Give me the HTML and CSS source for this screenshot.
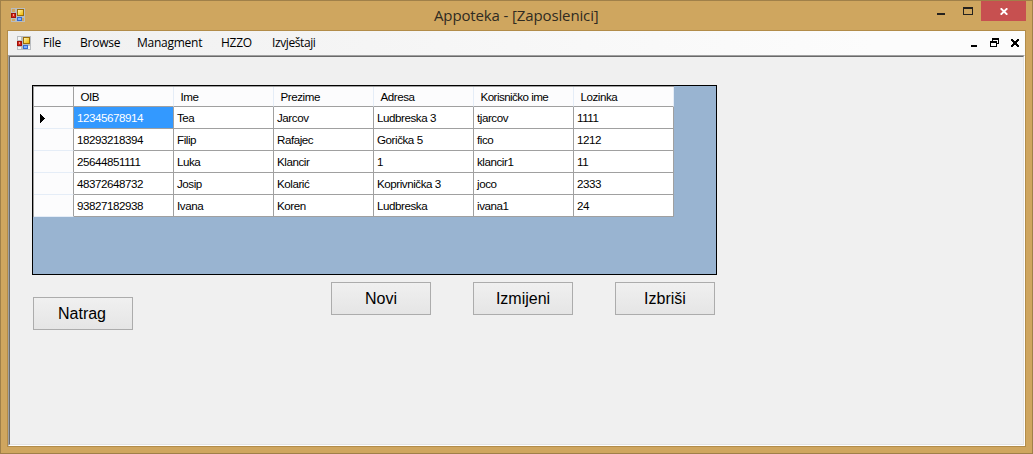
FILE: index.html
```html
<!DOCTYPE html>
<html lang="hr">
<head>
<meta charset="utf-8">
<title>Appoteka - [Zaposlenici]</title>
<link rel="stylesheet" href="styles.css">
</head>
<body>
<svg class="defs" width="0" height="0" aria-hidden="true">
  <defs>
    <linearGradient id="gold" x1="0" y1="0" x2="1" y2="1"><stop offset="0" stop-color="#fff3ae"/><stop offset="1" stop-color="#f0b800"/></linearGradient>
    <symbol id="form-icon" viewBox="0 0 14 14">
      <path d="M0 0H14V14H0Z" fill="#b9bcc0"/>
      <path d="M1 1H4V4H1ZM1 11H4V13H1ZM11 10H13V13H11Z" class="icon-gap"/>
      <path d="M0 5H5V10H0Z" fill="#9d1209"/><path d="M1 6H4V9H1Z" fill="#d9271c"/><path d="M2 6H3V8H2Z" fill="#f49a91"/>
      <path d="M6 1H13V8H6Z" fill="#9b6c08"/><path d="M7 2H12V7H7Z" fill="url(#gold)"/>
      <path d="M6 9H11V13H6Z" fill="#326bd1"/><path d="M7 10H10V12H7Z" fill="#82b0fa"/>
    </symbol>
  </defs>
</svg>
<div class="window">
  <header class="titlebar">
    <svg class="app-icon"><use href="#form-icon"/></svg>
    <h1 class="title">Appoteka - [Zaposlenici]</h1>
    <div class="controls">
      <svg class="minimize" viewBox="0 0 8 2"><path d="M0 0H8V2H0Z" fill="#25221e"/></svg>
      <svg class="maximize" viewBox="0 0 10 8"><path d="M0 0H10V8H0ZM1 2V7H9V2Z" fill="#25221e" fill-rule="evenodd"/></svg>
      <div class="close"><svg width="8" height="7" viewBox="0 0 8 7"><path d="M.7 .3L7.3 6.7M7.3 .3L.7 6.7" stroke="#fff" stroke-width="1.9"/></svg></div>
    </div>
  </header>
  <div class="client">
    <nav class="menubar">
      <svg class="child-icon"><use href="#form-icon"/></svg>
      <span class="menu file">File</span><span class="menu browse">Browse</span><span class="menu managment">Managment</span><span class="menu hzzo">HZZO</span><span class="menu reports">Izvještaji</span>
      <div class="child-controls">
        <svg class="child-min" viewBox="0 0 6 2"><path d="M0 0H6V2H0Z"/></svg>
        <svg class="child-restore" viewBox="0 0 9 9"><path d="M2 0H9V6H7V9H0V3H2ZM3 2V3H7V5H8V2ZM1 5V8H6V5Z" fill-rule="evenodd"/></svg>
        <svg class="child-close" viewBox="0 0 8 8"><path d="M0 0H2V1H3V2H5V1H6V0H8V2H7V3H6V5H7V6H8V8H6V7H5V6H3V7H2V8H0V6H1V5H2V3H1V2H0Z"/></svg>
      </div>
    </nav>
    <main class="mdi"><div class="form">
      <div class="datagrid">
        <table class="grid">
          <thead><tr><th class="row-head"></th><th>OIB</th><th>Ime</th><th>Prezime</th><th>Adresa</th><th class="username">Korisničko ime</th><th>Lozinka</th></tr></thead>
          <tbody>
            <tr><td class="row-head"><svg class="marker" viewBox="0 0 5 9"><path d="M0 0H1V1H2V2H3V3H4V4H5V5H4V6H3V7H2V8H1V9H0Z"/></svg></td><td class="selected">12345678914</td><td>Tea</td><td>Jarcov</td><td>Ludbreska 3</td><td>tjarcov</td><td>1111</td></tr>
            <tr><td class="row-head"></td><td>18293218394</td><td>Filip</td><td>Rafajec</td><td>Gorička 5</td><td>fico</td><td>1212</td></tr>
            <tr><td class="row-head"></td><td>25644851111</td><td>Luka</td><td>Klancir</td><td>1</td><td>klancir1</td><td>11</td></tr>
            <tr><td class="row-head"></td><td>48372648732</td><td>Josip</td><td>Kolarić</td><td>Koprivnička 3</td><td>joco</td><td>2333</td></tr>
            <tr><td class="row-head"></td><td>93827182938</td><td>Ivana</td><td>Koren</td><td>Ludbreska</td><td>ivana1</td><td>24</td></tr>
          </tbody>
        </table>
      </div>
      <div class="actions">
        <button class="button back">Natrag</button>
        <button class="button new">Novi</button>
        <button class="button">Izmijeni</button>
        <button class="button">Izbriši</button>
      </div>
    </div></main>
  </div>
</div>
</body>
</html>
```
FILE: styles.css
```css
* { box-sizing: border-box; }
body { margin: 0; overflow: hidden; }
svg { display: block; flex: none; }
.defs { position: absolute; }
.window { width: 1033px; height: 454px; border: 1px solid #a08049; background: #cfa65f; font-family: "Open Sans", "Noto Sans", sans-serif; }
.titlebar { display: flex; height: 29px; }
.app-icon { width: 14px; height: 14px; margin: 7px 0 0 10px; color: #cfa65f; }
.icon-gap { fill: currentColor; }
.title { margin: 0 0 0 409px; width: 180px; font-size: 15px; line-height: 29px; font-weight: 400; color: #302b22; white-space: nowrap; letter-spacing: -.13px; }
.controls { display: flex; margin-left: auto; margin-right: 6px; }
.minimize { width: 8px; height: 2px; margin: 12px 18px 0 0; }
.maximize { width: 10px; height: 8px; margin: 6px 8px 0 0; }
.close { width: 45px; height: 20px; background: #c75050; display: flex; align-items: center; justify-content: center; }
.client { width: 1019px; height: 417px; margin-left: 6px; border: 1px solid #b28c49; }
.menubar { height: 24px; display: flex; background: linear-gradient(90deg, #f0f0f0, #fcfcfc 85%); font-size: 12px; line-height: 24px; color: #000; }
.child-icon { width: 14px; height: 14px; margin: 5px 12px 0 9px; color: #f4f4f4; }
.menu { white-space: nowrap; letter-spacing: -.25px; }
.file { width: 37px; }
.browse { width: 57px; }
.managment { width: 84px; }
.hzzo { width: 51px; }
.reports { letter-spacing: -.4px; }
.child-controls { display: flex; margin-left: auto; margin-right: 6px; }
.child-min { width: 6px; height: 2px; margin: 14px 13px 0 0; }
.child-restore { width: 9px; height: 9px; margin: 7px 12px 0 0; }
.child-close { width: 8px; height: 8px; margin-top: 8px; }
.mdi { height: 391px; border: 1px solid; border-color: #a0a0a0 #fff #fff #a0a0a0; }
.form { height: 389px; padding: 28px 0 0 22px; background: #f0f0f0; border: 1px solid; border-color: #696969 #e3e3e3 #e3e3e3 #696969; }
.datagrid { width: 685px; height: 190px; border: 1px solid #000; background: #99b4d1; font-family: "Liberation Sans", Arial, sans-serif; }
.grid { width: 641px; table-layout: fixed; border-collapse: separate; border-spacing: 0; border: solid #a0a0a0; border-width: 1px 0 0 1px; font-size: 11.6px; letter-spacing: -.44px; color: #000; }
.grid th, .grid td { width: 100px; height: 22px; padding: 1px 0 0 3px; border: solid #a0a0a0; border-width: 0 1px 1px 0; background: #fff; text-align: left; font-weight: 400; line-height: 20px; white-space: nowrap; }
.grid th { height: 20px; padding: 1px 0 0 6.5px; line-height: 18px; background: #fcfcfd; border-right-color: #e5edf7; }
.grid .row-head { width: 40px; padding: 1px 0 0 6px; background: #fcfcfd; border-bottom-color: #e5edf7; border-right-color: #a0a0a0; }
.grid th.row-head { border-bottom-color: #a0a0a0; }
.grid .username { letter-spacing: -.55px; }
.grid .selected { background: #39f; color: #fff; }
.marker { width: 5px; height: 9px; }
.actions { display: flex; gap: 42px; margin-top: 7px; padding-left: 1px; }
.button { width: 100px; height: 33px; padding: 0; border: 1px solid #acacac; background: linear-gradient(#f0f0f0, #e5e5e5); color: #000; font: 16px "Liberation Sans", Arial, sans-serif; }
.back { margin-top: 15px; padding-right: 2px; }
.new { margin-left: 156px; }
```
